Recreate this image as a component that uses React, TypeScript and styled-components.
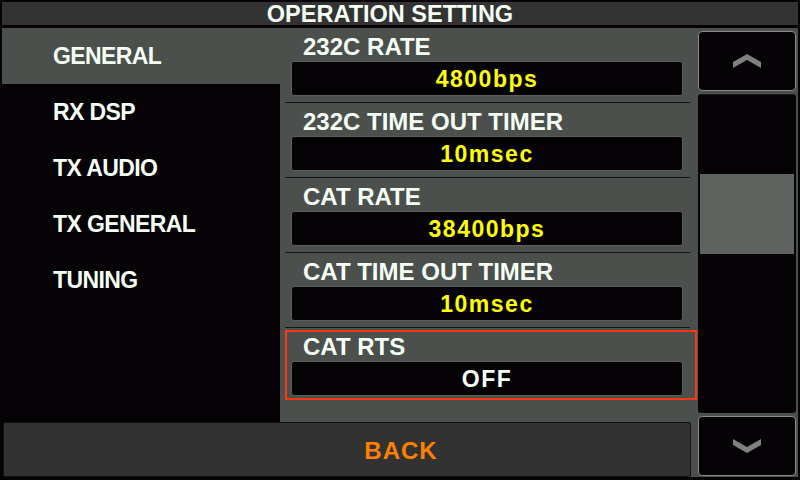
import styled, { createGlobalStyle } from "styled-components";

const GlobalStyle = createGlobalStyle`
  * {
    box-sizing: border-box;
  }
  body {
    margin: 0;
    background: #050305;
  }
`;

const FONT = `"Liberation Sans", Arial, sans-serif`;

const Frame = styled.div`
  width: 800px;
  height: 480px;
  background: #050305;
  display: flex;
  flex-direction: column;
  font-family: ${FONT};
  font-weight: bold;
  color: #f6fff6;
  overflow: hidden;
`;

const TitleBar = styled.div`
  margin: 2px 2px 0;
  height: 23px;
  background: #333333;
  display: flex;
  justify-content: center;
  align-items: center;
  font-size: 23.5px;
  line-height: 23px;
  padding: 2px 20px 0 0;
`;

const Body = styled.div`
  margin: 3px 2px 3px 0;
  height: 449px;
  background: #4b504c;
  display: grid;
  grid-template-columns: 280px 417px 101px;
  grid-template-rows: 392px 57px;
`;

const Nav = styled.div`
  grid-column: 1;
  grid-row: 1 / 3;
  background: #050305;
  display: flex;
  flex-direction: column;
`;

const NavItem = styled.div<{ $active?: boolean }>`
  height: 56px;
  display: flex;
  align-items: center;
  padding-left: ${(p) => (p.$active ? "51px" : "53px")};
  margin-left: ${(p) => (p.$active ? "2px" : "0")};
  background: ${(p) => (p.$active ? "#4b504c" : "transparent")};
  font-size: 23px;
  letter-spacing: -0.6px;
  padding-top: 1px;
`;

const Content = styled.div`
  grid-column: 2;
  grid-row: 1 / 3;
  display: flex;
  flex-direction: column;
`;

const Row = styled.div<{ $selected?: boolean }>`
  display: flex;
  flex-direction: column;
  ${(p) =>
    p.$selected
      ? `
    height: 70px;
    margin: 2px 0 0 5px;
    border: 2px solid #ff3814;
    padding: 3px 12px 0 4px;
  `
      : `
    height: 75px;
    margin: 0 7px 0 5px;
    border-bottom: 1px solid #161616;
    padding: 7px 7px 0 6px;
  `}
`;

const Label = styled.div`
  font-size: 24px;
  line-height: 24px;
  padding-left: 12px;
`;

const ValueBox = styled.div<{ $color: string }>`
  margin-top: 2px;
  height: 35px;
  border: 1px solid #5c5c5c;
  border-radius: 3px;
  background: #050305;
  display: flex;
  justify-content: center;
  align-items: center;
  font-size: 23px;
  letter-spacing: 1.5px;
  color: ${(p) => p.$color};
  padding-top: 1px;
`;

const ScrollColumn = styled.div`
  grid-column: 3;
  grid-row: 1 / 3;
  display: flex;
  flex-direction: column;
  gap: 3px;
  padding: 3px 2px 1px 1px;
`;

const ArrowButton = styled.div`
  height: 60px;
  flex: none;
  background: #050305;
  border: 1px solid #8a8a8a;
  border-radius: 4px;
  display: flex;
  justify-content: center;
  align-items: center;
`;

const Track = styled.div`
  flex: 1;
  background: #050305;
  border-radius: 3px;
  border-top: 1px solid #1c1c1c;
  padding: 0 2px;
`;

const Thumb = styled.div<{ $offset: number }>`
  margin-top: ${(p) => p.$offset}px;
  height: 80px;
  background: #5e635f;
`;

const BackButton = styled.div`
  grid-column: 1 / 3;
  grid-row: 2;
  margin: 2px 6px 0 3px;
  background: #323232;
  border: 1px solid #101010;
  border-radius: 2px;
  display: flex;
  justify-content: center;
  align-items: center;
  padding-left: 108px;
  padding-top: 2px;
  font-size: 24px;
  letter-spacing: 1px;
  color: #ff8000;
`;

const Chevron = ({ up }: { up?: boolean }) => (
  <svg width="28" height="15" viewBox="0 0 28 15">
    <polygon
      fill="#808080"
      points={up ? "0,8 14,0 28,8 28,14 14,6 0,14" : "0,0 14,8 28,0 28,6 14,14 0,6"}
    />
  </svg>
);

const navItems = ["GENERAL", "RX DSP", "TX AUDIO", "TX GENERAL", "TUNING"];

const settings = [
  { label: "232C RATE", value: "4800bps", color: "#ffff00" },
  { label: "232C TIME OUT TIMER", value: "10msec", color: "#ffff00" },
  { label: "CAT RATE", value: "38400bps", color: "#ffff00" },
  { label: "CAT TIME OUT TIMER", value: "10msec", color: "#ffff00" },
  { label: "CAT RTS", value: "OFF", color: "#f6fff6", selected: true },
];

export default function App() {
  return (
    <>
      <GlobalStyle />
      <Frame>
        <TitleBar>OPERATION SETTING</TitleBar>
        <Body>
          <Nav>
            {navItems.map((item, i) => (
              <NavItem key={item} $active={i === 0}>
                {item}
              </NavItem>
            ))}
          </Nav>
          <Content>
            {settings.map((s) => (
              <Row key={s.label} $selected={s.selected}>
                <Label>{s.label}</Label>
                <ValueBox $color={s.color}>{s.value}</ValueBox>
              </Row>
            ))}
          </Content>
          <ScrollColumn>
            <ArrowButton>
              <Chevron up />
            </ArrowButton>
            <Track>
              <Thumb $offset={79} />
            </Track>
            <ArrowButton>
              <Chevron />
            </ArrowButton>
          </ScrollColumn>
          <BackButton>BACK</BackButton>
        </Body>
      </Frame>
    </>
  );
}
